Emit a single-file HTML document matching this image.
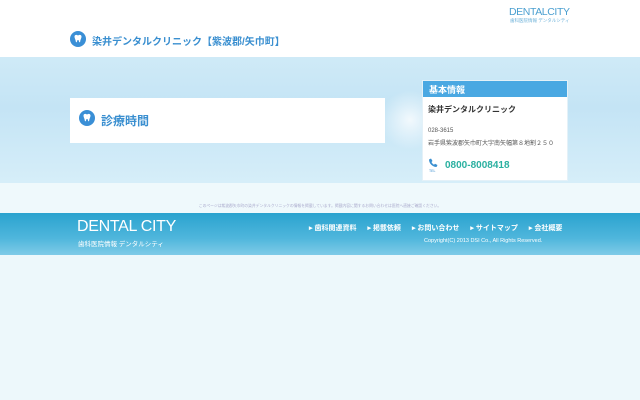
<!DOCTYPE html>
<html><head><meta charset="utf-8">
<style>
*{margin:0;padding:0;box-sizing:border-box}
body{width:640px;height:400px;overflow:hidden;background:#edf8fb;font-family:"Liberation Sans","Noto Sans CJK JP",sans-serif;position:relative}
.abs{position:absolute}
.nav span{display:inline-block;margin-right:11px}
</style></head><body>
<div class="abs" style="left:0;top:0;width:640px;height:57px;background:#fff"></div>
<div class="abs" style="left:509px;top:6px;font-size:10.5px;color:#4a9fd0;letter-spacing:-0.4px">DENTALCITY</div>
<div class="abs" style="left:510px;top:18px;font-size:4.5px;color:#6ab0d8">歯科医院情報 デンタルシティ</div>
<svg class="abs" style="left:70px;top:31px" width="16" height="16" viewBox="0 0 16 16"><circle cx="8" cy="8" r="8" fill="#3a8fd6"/><path d="M4.5 5.5c0-1.5 1.5-2 2.5-1.5l1 .5 1-.5c1-.5 2.5 0 2.5 1.5 0 2-1 2.5-1.3 5-.2 1-1 1-1.2 0L8.5 9h-1l-.5 1.5c-.2 1-1 1-1.2 0C5.5 8 4.5 7.5 4.5 5.5z" fill="#fff"/></svg>
<div class="abs" style="left:92px;top:33px;font-size:10px;font-weight:bold;color:#3a8fd0">染井デンタルクリニック【紫波郡/矢巾町】</div>
<div class="abs" style="left:0;top:57px;width:640px;height:126px;background:linear-gradient(180deg,#cfeaf7 0%,#c4e4f5 40%,#d6eef9 100%)"></div>
<div class="abs" style="left:380px;top:90px;width:60px;height:60px;border-radius:50%;background:radial-gradient(#f2f9fd,rgba(230,245,252,0) 70%)"></div>
<div class="abs" style="left:70px;top:98px;width:315px;height:45px;background:#fff"></div>
<svg class="abs" style="left:79px;top:110px" width="16" height="16" viewBox="0 0 16 16"><circle cx="8" cy="8" r="8" fill="#3a8fd6"/><path d="M4.5 5.5c0-1.5 1.5-2 2.5-1.5l1 .5 1-.5c1-.5 2.5 0 2.5 1.5 0 2-1 2.5-1.3 5-.2 1-1 1-1.2 0L8.5 9h-1l-.5 1.5c-.2 1-1 1-1.2 0C5.5 8 4.5 7.5 4.5 5.5z" fill="#fff"/></svg>
<div class="abs" style="left:101px;top:112px;font-size:12px;font-weight:bold;color:#3a8fd0">診療時間</div>
<div class="abs" style="left:422px;top:80px;width:146px;height:101px;background:#fff;border:1px solid #e4f1f8"></div>
<div class="abs" style="left:423px;top:81px;width:144px;height:16px;background:#4aa8e2"></div>
<div class="abs" style="left:429px;top:83px;font-size:9px;font-weight:bold;color:#fff">基本情報</div>
<div class="abs" style="left:428px;top:104px;font-size:8px;font-weight:bold;color:#333">染井デンタルクリニック</div>
<div class="abs" style="left:428px;top:128px;font-size:6px;color:#555">028-3615</div>
<div class="abs" style="left:428px;top:138px;font-size:6px;color:#555">岩手県紫波郡矢巾町大字南矢幅第８地割２５０</div>
<svg class="abs" style="left:428px;top:158px" width="10" height="10" viewBox="0 0 10 10"><path d="M1 1.5l2-1 1.5 2.5-1 1c.5 1.3 1.5 2.3 2.5 2.7l1-1L9.5 7l-1 2C4.5 9 1 5.5 1 1.5z" fill="#3a8fd0"/></svg>
<div class="abs" style="left:429px;top:169px;font-size:3.5px;color:#3a8fd0">TEL</div>
<div class="abs" style="left:445px;top:160px;font-size:10px;font-weight:bold;color:#2ab0a0">0800-8008418</div>
<div class="abs" style="left:0;top:183px;width:640px;height:31px;background:#eff9fc"></div>
<div class="abs" style="left:0;top:204px;width:640px;text-align:center;font-size:3.8px;color:#aac">このページは紫波郡矢巾町の染井デンタルクリニックの情報を掲載しています。掲載内容に関するお問い合わせは医院へ直接ご確認ください。</div>
<div class="abs" style="left:0;top:213px;width:640px;height:42px;background:linear-gradient(180deg,#2aa3cf 0%,#4fb6dc 60%,#7fcbe7 100%)"></div>
<div class="abs" style="left:77px;top:218px;font-size:16px;color:#fff;letter-spacing:-0.3px">DENTAL CITY</div>
<div class="abs" style="left:78px;top:238px;font-size:6.5px;color:#fff">歯科医院情報 デンタルシティ</div>
<div class="abs nav" style="left:309px;top:223px;font-size:7px;color:#fff;font-weight:bold;white-space:nowrap"><span>▸ 歯科関連資料</span><span>▸ 掲載依頼</span><span>▸ お問い合わせ</span><span>▸ サイトマップ</span><span>▸ 会社概要</span></div>
<div class="abs" style="left:424px;top:238px;font-size:5.5px;color:#fff">Copyright(C) 2013 DSI Co., All Rights Reserved.</div>
</body></html>
